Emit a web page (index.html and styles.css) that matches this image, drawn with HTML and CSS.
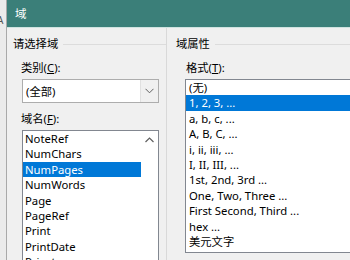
FILE: index.html
```html
<!DOCTYPE html>
<html>
	<head>
		<meta charset="UTF-8">
		<title>域</title>
		<link rel="stylesheet" href="styles.css">
	</head>
	<body>
		<div class="screen">
			<div class="doc-edge">
				<span class="doc-a">A</span>
			</div>
			<div class="dialog">
				<div class="titlebar">
					<span class="title">域</span>
				</div>
				<div class="content">
					<!--左边：请选择域-->
					<div class="group group-left">
						<div class="group-head">
							<span>请选择域</span>
							<i class="rule"></i>
						</div>
						<div class="group-body">
							<label class="field-label">类别(<u>C</u>):</label>
							<div class="combo">
								<span class="combo-text">(全部)</span>
								<span class="combo-btn">
									<svg width="9" height="6" viewBox="0 0 9 6"><path d="M0.5 0.8 L4.5 4.8 L8.5 0.8" fill="none" stroke="#606060" stroke-width="1"/></svg>
								</span>
							</div>
							<label class="field-label">域名(<u>F</u>):</label>
							<div class="listbox names">
								<ul>
									<li>NoteRef</li>
									<li>NumChars</li>
									<li class="on">NumPages</li>
									<li>NumWords</li>
									<li>Page</li>
									<li>PageRef</li>
									<li>Print</li>
									<li>PrintDate</li>
									<li>Private</li>
								</ul>
								<div class="scrollbar">
									<svg width="9" height="6" viewBox="0 0 9 6"><path d="M0.5 5 L4.5 1 L8.5 5" fill="none" stroke="#606060" stroke-width="1.2"/></svg>
								</div>
							</div>
						</div>
					</div>
					<!--右边：域属性-->
					<div class="group group-right">
						<div class="group-head">
							<span>域属性</span>
							<i class="rule"></i>
						</div>
						<div class="group-body">
							<label class="field-label">格式(<u>T</u>):</label>
							<div class="listbox formats">
								<ul>
									<li>(无)</li>
									<li class="on">1, 2, 3, ...</li>
									<li>a, b, c, ...</li>
									<li>A, B, C, ...</li>
									<li>i, ii, iii, ...</li>
									<li>I, II, III, ...</li>
									<li>1st, 2nd, 3rd ...</li>
									<li>One, Two, Three ...</li>
									<li>First Second, Third ...</li>
									<li>hex ...</li>
									<li>美元文字</li>
								</ul>
							</div>
						</div>
					</div>
				</div>
			</div>
		</div>
	</body>
</html>
```

FILE: styles.css
```css
*{
	margin: 0;
	padding: 0;
}
html,body{
	width: 350px;
	height: 260px;
	overflow: hidden;
}
body{
	font-family: "Noto Sans", "Noto Sans CJK SC", sans-serif;
	font-size: 11.3px;
	color: #000;
	background: #f0f0f0;
}
.screen{
	display: flex;
	height: 260px;
}
/*左边露出的文档*/
.doc-edge{
	width: 6px;
	flex: none;
	background: #ebebeb;
	border-right: 1px solid #a9a9a9;
	overflow: hidden;
	position: relative;
}
.doc-a{
	position: absolute;
	left: -3px;
	top: 13px;
	font-size: 10px;
	color: #555;
}
.dialog{
	flex: 1;
	display: flex;
	flex-direction: column;
	min-width: 0;
}
.titlebar{
	height: 27px;
	flex: none;
	background: #3b7f79;
	border-bottom: 1px solid #cfe3e0;
	display: flex;
	align-items: center;
	padding-left: 8px;
}
.title{
	color: #fff;
	font-size: 11.5px;
	line-height: 16px;
}
.content{
	flex: 1;
	display: flex;
	min-height: 0;
}
.group{
	display: flex;
	flex-direction: column;
}
.group-left{
	width: 159px;
	flex: none;
	border-right: 1px solid #d9d9d9;
}
.group-right{
	flex: 1;
	min-width: 0;
	padding-left: 9px;
}
.group-head{
	display: flex;
	align-items: center;
	height: 16px;
	margin-top: 8px;
	line-height: 16px;
	white-space: nowrap;
}
.group-left .group-head{
	padding-left: 6px;
}
.group-head .rule{
	flex: 1;
	border-top: 1px solid #dcdcdc;
	margin-left: 5px;
}
.group-body{
	display: flex;
	flex-direction: column;
	align-items: flex-start;
	flex: 1;
	min-height: 0;
}
.group-left .group-body{
	padding-left: 14px;
}
.group-right .group-body{
	padding-left: 10px;
}
.field-label{
	display: block;
	line-height: 16px;
	margin-top: 8px;
	white-space: nowrap;
}
.field-label u{
	text-decoration: underline;
}
.combo{
	margin-top: 3px;
	margin-left: 1px;
	width: 137px;
	height: 24px;
	box-sizing: border-box;
	border: 1px solid #adadad;
	background: #fff;
	display: flex;
	align-items: center;
}
.combo-text{
	flex: 1;
	padding-left: 3px;
}
.combo-btn{
	width: 17px;
	height: 22px;
	background: #f0f0f0;
	border-left: 1px solid #e0e0e0;
	display: flex;
	align-items: center;
	justify-content: center;
}
.listbox{
	margin-top: 3px;
	background: #fff;
	border: 1px solid #828790;
	display: flex;
	flex: 1;
}
.names{
	margin-left: 1px;
	width: 137px;
	box-sizing: border-box;
}
.formats{
	width: 180px;
	margin-left: -1px;
	border-right: none;
	align-self: stretch;
	margin-bottom: 7px;
}
.listbox ul{
	list-style: none;
	flex: 1;
}
.listbox li{
	height: 15.4px;
	line-height: 15.4px;
	padding-left: 2px;
	white-space: nowrap;
}
.formats li{
	padding-left: 3px;
}
.listbox li.on{
	background: #0078d7;
	color: #fff;
}
.scrollbar{
	width: 17px;
	flex: none;
	background: #fff;
	display: flex;
	justify-content: center;
	padding-top: 6px;
	box-sizing: border-box;
}
```
